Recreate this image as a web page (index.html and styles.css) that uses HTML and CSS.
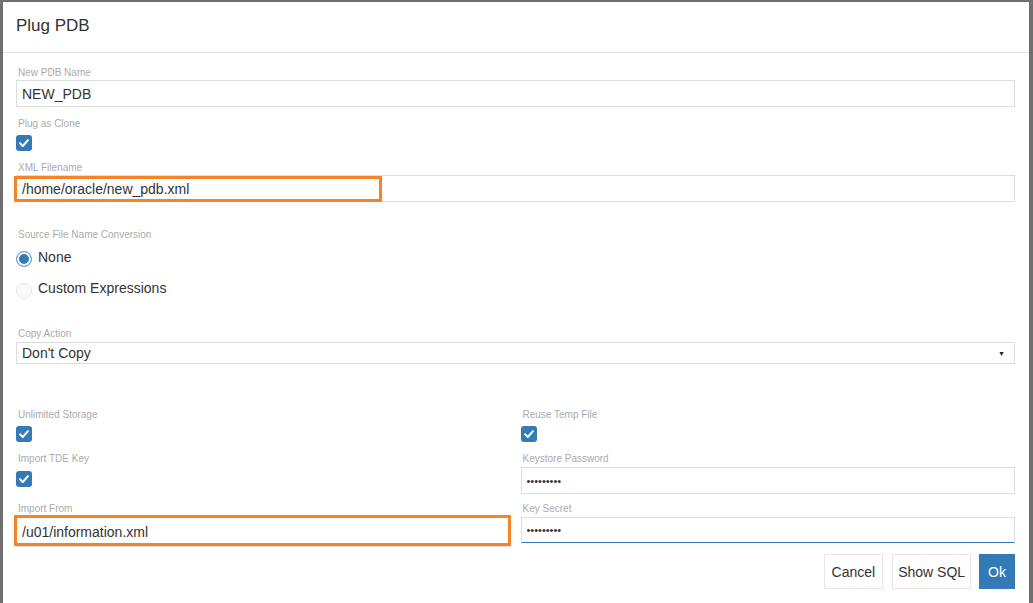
FILE: index.html
```html
<!DOCTYPE html>
<html>
<head>
<meta charset="utf-8">
<link rel="stylesheet" href="styles.css">
</head>
<body>
<div class="dialog">
  <div class="header"><h1 class="title">Plug PDB</h1></div>
  <div class="body">
    <div class="field">
      <div class="label">New PDB Name</div>
      <input class="input" type="text" value="NEW_PDB">
    </div>
    <div class="field clone">
      <div class="label">Plug as Clone</div>
      <div class="check-row"><span class="checkbox"><svg viewBox="0 0 16 16" width="16" height="16"><path d="M4 8.3 L6.8 11 L12 5.2" fill="none" stroke="#fff" stroke-width="2" stroke-linecap="round" stroke-linejoin="round"/></svg></span></div>
    </div>
    <div class="field xml">
      <div class="label">XML Filename</div>
      <div class="annot-wrap">
        <input class="input" type="text" value="/home/oracle/new_pdb.xml">
        <div class="annot annot-xml"></div>
      </div>
    </div>

    <div class="field section">
      <div class="label">Source File Name Conversion</div>
      <div class="radio-row"><span class="radio on"></span><span class="radio-text">None</span></div>
      <div class="radio-row"><span class="radio"></span><span class="radio-text">Custom Expressions</span></div>
    </div>

    <div class="field section-copy">
      <div class="label">Copy Action</div>
      <div class="select"><span>Don't Copy</span><span class="arrow">▼</span></div>
    </div>

    <div class="grid">
      <div class="col">
        <div class="field">
          <div class="label">Unlimited Storage</div>
          <div class="check-row"><span class="checkbox"><svg viewBox="0 0 16 16" width="16" height="16"><path d="M4 8.3 L6.8 11 L12 5.2" fill="none" stroke="#fff" stroke-width="2" stroke-linecap="round" stroke-linejoin="round"/></svg></span></div>
        </div>
        <div class="field tde">
          <div class="label">Import TDE Key</div>
          <div class="check-row tall"><span class="checkbox"><svg viewBox="0 0 16 16" width="16" height="16"><path d="M4 8.3 L6.8 11 L12 5.2" fill="none" stroke="#fff" stroke-width="2" stroke-linecap="round" stroke-linejoin="round"/></svg></span></div>
        </div>
        <div class="field import">
          <div class="label">Import From</div>
          <div class="annot-wrap">
            <input class="input tallinput" type="text" value="/u01/information.xml">
            <div class="annot annot-import"></div>
          </div>
        </div>
      </div>
      <div class="col">
        <div class="field">
          <div class="label">Reuse Temp File</div>
          <div class="check-row"><span class="checkbox"><svg viewBox="0 0 16 16" width="16" height="16"><path d="M4 8.3 L6.8 11 L12 5.2" fill="none" stroke="#fff" stroke-width="2" stroke-linecap="round" stroke-linejoin="round"/></svg></span></div>
        </div>
        <div class="field keystore">
          <div class="label">Keystore Password</div>
          <input class="input pw" type="password" value="secret123">
        </div>
        <div class="field secret">
          <div class="label">Key Secret</div>
          <input class="input pw focus" type="password" value="secret123">
        </div>
      </div>
    </div>

    <div class="footer">
      <button class="btn">Cancel</button>
      <button class="btn sql">Show SQL</button>
      <button class="btn primary">Ok</button>
    </div>
  </div>
</div>
</body>
</html>
```

FILE: styles.css
```css
html, body {
  margin: 0;
  padding: 0;
  height: 100%;
  overflow: hidden;
}
body {
  background: #6f6f6f;
  font-family: "Liberation Sans", Arial, sans-serif;
  color: #333;
}
.dialog {
  margin: 2px 4px 0 3px;
  background: #fff;
  height: 601px;
  box-sizing: border-box;
}
.header {
  height: 50px;
  border-bottom: 1px solid #e5e5e5;
  padding: 0 13px;
  display: flex;
  align-items: center;
}
.title {
  margin: 0;
  font-size: 17px;
  font-weight: normal;
  color: #333;
  position: relative;
  top: -1px;
}
.body {
  padding: 13px 14px 0 13px;
}
.field {
  display: flex;
  flex-direction: column;
}
.label {
  font-size: 10px;
  line-height: 14px;
  color: #aaa;
  padding-left: 2px;
}
.input {
  display: block;
  width: 100%;
  box-sizing: border-box;
  height: 27px;
  border: 1px solid #ddd;
  border-radius: 0;
  padding: 0 5px;
  font-family: "Liberation Sans", Arial, sans-serif;
  font-size: 14px;
  color: #333;
  background: #fff;
  outline: none;
  margin: 0;
}
.field.clone { margin-top: 10px; }
.field.xml { margin-top: 8px; }
.check-row {
  height: 20px;
  display: flex;
  align-items: flex-end;
  padding-bottom: 2px;
}
.checkbox {
  width: 16px;
  height: 16px;
  border-radius: 3px;
  background: #337ab7;
  display: block;
}
.checkbox svg { display: block; }
.annot-wrap { position: relative; }
.annot {
  position: absolute;
  border: 3px solid #f58426;
  box-sizing: border-box;
  pointer-events: none;
}
.annot-xml { left: -2px; top: 1px; width: 368px; height: 26px; }
.annot-import { left: -2px; top: -1px; width: 497px; height: 31px; }

.field.section { margin-top: 26px; }
.radio-row {
  display: flex;
  align-items: center;
  height: 31px;
}
.radio {
  width: 14px;
  height: 14px;
  border-radius: 50%;
  border: 1px solid #eaeaea;
  background: #fafafa;
  margin-right: 7px;
  flex: none;
  position: relative;
  top: 2px;
}
.radio.on {
  border: 1px solid #6aa0d0;
  background: #337ab7;
  box-shadow: inset 0 0 0 2px #fff;
  top: 1px;
}
.radio-text {
  font-size: 14px;
  color: #333;
  position: relative;
  top: -1px;
  left: -1px;
}
.field.section-copy { margin-top: 23px; }
.select {
  height: 22px;
  margin-top: 1px;
  border: 1px solid #ddd;
  box-sizing: border-box;
  display: flex;
  align-items: center;
  justify-content: space-between;
  padding: 0 9px 0 5px;
  font-size: 14px;
  color: #333;
}
.select .arrow {
  font-size: 7px;
  color: #222;
}
.grid {
  display: grid;
  grid-template-columns: 1fr 1fr;
  column-gap: 10px;
  margin-top: 44px;
}
.col { display: flex; flex-direction: column; }
.check-row.tall { height: 21px; }
.field.tde { margin-top: 8px; }
.field.import { margin-top: 13px; }
.tallinput { height: 30px; margin-top: 1px; }
.field.keystore { margin-top: 8px; }
.keystore .input { height: 27px; margin-top: 1px; }
.field.secret { margin-top: 8px; }
.secret .input { height: 26px; margin-top: 1px; }
.pw { font-size: 11px; }
.focus { border-bottom: 1px solid #337ab7; }
.footer {
  display: flex;
  justify-content: flex-end;
  gap: 9px;
  margin-top: 7px;
}
.btn {
  height: 35px;
  border: 1px solid #e6e6e6;
  background: #fff;
  color: #333;
  font-family: "Liberation Sans", Arial, sans-serif;
  font-size: 14px;
  padding: 0 7px;
  border-radius: 0;
  margin: 0;
}
.btn.sql { padding: 0 5px; }
.btn.primary {
  background: #337ab7;
  border-color: #337ab7;
  color: #fff;
  padding: 0 8px;
  margin-left: -1px;
}
```
